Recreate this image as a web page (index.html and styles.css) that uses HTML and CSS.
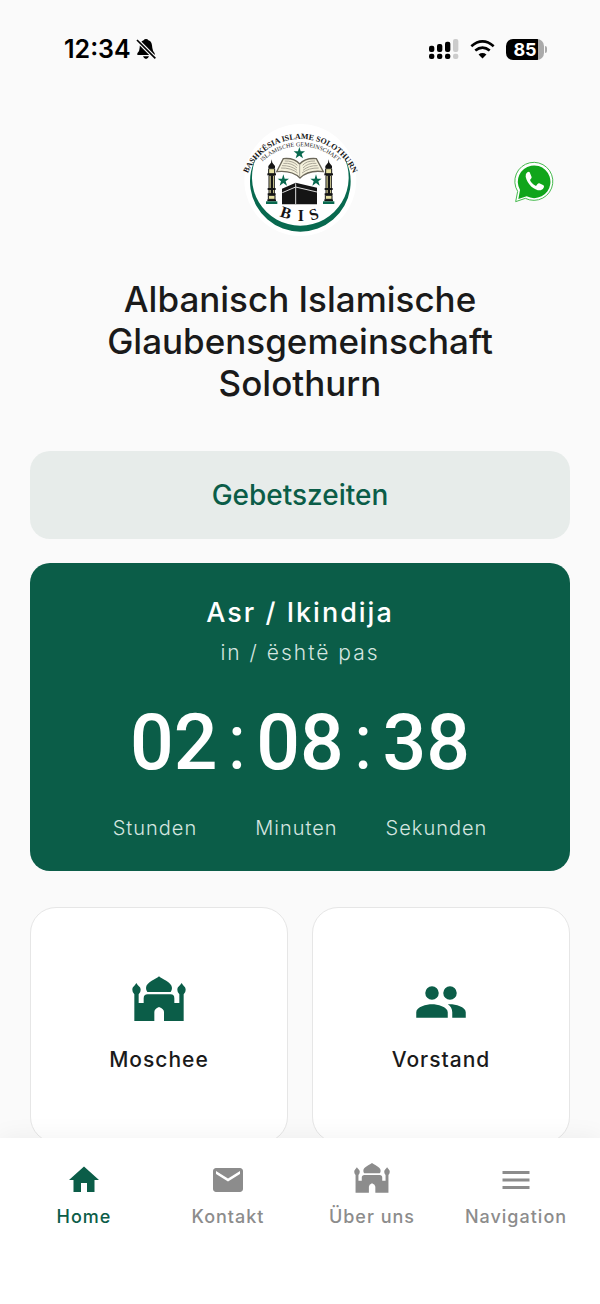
FILE: index.html
```html
<!DOCTYPE html>
<html lang="de">
<head>
<meta charset="utf-8">
<meta name="viewport" content="width=device-width, initial-scale=1">
<title>Albanisch Islamische Glaubensgemeinschaft Solothurn</title>
<link rel="stylesheet" href="styles.css">
</head>
<body>
<svg class="defs" width="0" height="0" aria-hidden="true">
  <symbol id="mosque" viewBox="336 255 162 162">
    <path d="M417 259C423 266 456 276 456 294Q456 301 452 306H382Q378 301 378 294C378 276 411 266 417 259Z"/>
    <path d="M343 393V313Q337 308 337 299C337 290 344 289 349 279C354 289 362 290 362 299Q362 308 356 313V339H371V325Q371 313 383 313H452Q463 313 463 325V339H478V313Q472 308 472 299C472 290 479 289 485 279C490 289 497 290 497 299Q497 308 491 313V393H432V366Q432 357 417 351Q403 357 403 366V393Z"/>
  </symbol>
  <symbol id="people" viewBox="0 0 24 24"><path d="M16 11a3 3 0 1 0 0-6 3 3 0 0 0 0 6zm-8 0a3 3 0 1 0 0-6 3 3 0 0 0 0 6zm0 2c-2.330 0-7 1.170-7 3.500V19h14v-2.500c0-2.330-4.670-3.500-7-3.500zm8 0c-.29 0-.62.020-.97.050 1.160.840 1.970 1.970 1.970 3.450V19h6v-2.500c0-2.330-4.670-3.500-7-3.500z"/></symbol>
  <symbol id="home" viewBox="0 0 24 24"><path d="M10 20v-6h4v6h5v-8h3L12 3 2 12h3v8z"/></symbol>
  <symbol id="mail" viewBox="0 0 24 24"><path d="M20 4H4c-1.100 0-2 .9-2 2v12c0 1.100.9 2 2 2h16c1.100 0 2-.9 2-2V6c0-1.100-.9-2-2-2zm0 4-8 5-8-5V6l8 5 8-5z"/></symbol>
  <symbol id="menu" viewBox="0 0 24 24"><path d="M3 6h18v2H3zM3 11h18v2H3zM3 16h18v2H3z"/></symbol>
</svg>

<div class="app">
  <header class="status">
    <div class="status-side">
      <span class="time">12:34</span>
      <svg class="bell" viewBox="0 0 60 64" aria-label="Stumm">
        <path d="M30 2Q35 2 37 6C47 9 48 18 49 29Q50 38 56 45V50H4V45Q11 38 11 28C12 17 14 9 23 6Q25 2 30 2ZM21 54H39Q36 62 30 62Q24 62 21 54Z"/>
        <path class="bell-gap" d="M1 3 59 61"/><path class="bell-slash" d="M3 5 58 60"/>
      </svg>
    </div>
    <div class="status-side status-right">
      <svg class="signal" viewBox="0 0 90 60" aria-label="Signal">
        <rect x="0" y="20" width="16" height="19" rx="6"/><rect x="24" y="15" width="16" height="24" rx="6"/><rect x="48" y="8" width="16" height="31" rx="6"/><rect class="weak" x="72" y="0" width="16" height="39" rx="6"/>
        <rect x="0" y="44" width="16" height="16" rx="6"/><rect x="24" y="44" width="16" height="16" rx="6"/><rect x="48" y="44" width="16" height="16" rx="6"/><rect class="weak" x="72" y="44" width="16" height="16" rx="6"/>
      </svg>
      <svg class="wifi" viewBox="0 0 76 56" aria-label="WLAN">
        <path d="M4 18Q38-11 72 18M16 31Q38 13 60 31"/><path class="wifi-dot" d="M26 43Q38 34 50 43L38 55Z"/>
      </svg>
      <span class="battery"><span class="battery-level">85</span></span>
    </div>
  </header>

  <main class="content">
    <div class="brand">
      <svg class="logo" viewBox="0 0 390 360" role="img" aria-label="Bashkësia Islame Solothurn">
        <defs>
          <path id="arc-outer" d="M33 174A172 172 0 0 1 359 174"/>
          <path id="arc-inner" d="M76 132A162 162 0 0 1 316 132"/>
          <path id="star" d="M0-18 4-5H17L7 3 11 16 0 8-11 16-7 3-17-5H-4Z"/>
          <g id="minaret">
            <path d="M0-68 2-58 10-48V-42H-10V-48L-2-58Z"/>
            <path class="gold" d="M-9-40H9V-24H-9Z"/><path d="M-13-26H13V-20H-13Z"/>
            <path class="gold" d="M-8-20H8V36H-8Z"/><path d="M-3-20H4V36H-3Z"/>
            <path d="M-12 18H12V24H-12ZM-12 34H12V40H-12Z"/>
            <path class="gold" d="M-10 40H10V52H-10Z"/><path d="M-13 52H13V58H-13Z"/>
            <path class="green" d="M-17 58H17V66H-17Z"/>
          </g>
        </defs>
        <circle class="white" cx="196" cy="180" r="168"/>
        <path class="green" d="M68 104A151 151 0 1 0 324 104A145 145 0 1 1 68 104Z"/>
        <text class="logo-outer" text-anchor="middle"><textPath href="#arc-outer" startOffset="50%">BASHKËSIA ISLAME SOLOTHURN</textPath></text>
        <text class="logo-inner" text-anchor="middle"><textPath href="#arc-inner" startOffset="50%">ISLAMISCHE GEMEINSCHAFT</textPath></text>
        <g class="green"><use href="#star" x="193" y="99"/><use href="#star" x="145" y="181"/><use href="#star" x="243" y="181"/></g>
        <path class="book" d="M145 116Q178 113 194 132Q211 113 244 116L265 155Q220 149 195 174Q171 150 125 155Z"/>
        <path class="lines" d="M149 123Q174 122 187 136M145 130Q171 128 186 144M141 137Q168 136 186 151M138 144Q168 143 188 159M240 123Q214 122 203 136M244 130Q219 128 204 144M248 137Q221 136 204 151M251 144Q222 143 201 159M194 132V170"/>
        <use href="#minaret" x="110" y="186"/><use href="#minaret" x="281" y="186"/>
        <path d="M141 206 182 188 246 203V253H141Z"/>
        <path class="band" d="M142 218 182 201 246 216M182 190V252"/>
        <text class="logo-bis" x="133 188 229" y="289 303 302" rotate="18 0 -18">BIS</text>
      </svg>
      <a class="whatsapp" href="#whatsapp" aria-label="WhatsApp">
        <svg viewBox="0 0 120 126">
          <path class="wa-edge" d="M5 122 11 91A57 57 0 1 1 34 112Z"/>
          <path class="wa-fill" d="M13 114 18 87A49 49 0 1 1 38 106Z"/>
          <path class="wa-phone" d="M40 34Q34 38 35 47C40 70 61 89 80 88Q88 86 90 78Q91 74 87 72L76 67Q73 66 70 70L66 75Q52 68 48 57L52 52Q54 49 52 46L47 34Q45 31 40 34Z"/>
        </svg>
      </a>
    </div>

    <h1 class="title">Albanisch Islamische Glaubensgemeinschaft Solothurn</h1>

    <button class="times" type="button">Gebetszeiten</button>

    <section class="countdown">
      <h2 class="prayer">Asr / Ikindija</h2>
      <p class="until">in / është pas</p>
      <div class="clock"><span>02</span><span class="colon">:</span><span>08</span><span class="colon">:</span><span>38</span></div>
      <div class="units"><span>Stunden</span><span>Minuten</span><span>Sekunden</span></div>
    </section>

    <div class="tiles">
      <a class="tile" href="#moschee"><svg class="tile-icon"><use href="#mosque"/></svg>Moschee</a>
      <a class="tile" href="#vorstand"><svg class="tile-icon"><use href="#people"/></svg>Vorstand</a>
    </div>
  </main>

  <nav class="tabs">
    <a class="tab active" href="#home" aria-current="page"><svg class="tab-icon"><use href="#home"/></svg>Home</a>
    <a class="tab" href="#kontakt"><svg class="tab-icon"><use href="#mail"/></svg>Kontakt</a>
    <a class="tab" href="#ueber-uns"><svg class="tab-icon"><use href="#mosque"/></svg>Über uns</a>
    <a class="tab" href="#navigation"><svg class="tab-icon"><use href="#menu"/></svg>Navigation</a>
  </nav>
</div>
</body>
</html>
```
FILE: styles.css
```css
* { box-sizing: border-box; }

:root {
  --green: #0b5d48;
  --grey: #8c8c8c;
  --ink: #1a1a1a;
}

body {
  margin: 0;
  background: #fafafa;
  color: var(--ink);
  font-family: Inter, "Liberation Sans", sans-serif;
}

a { color: inherit; text-decoration: none; }
svg { display: block; fill: currentColor; }
.defs { position: absolute; }

.app { display: flex; flex-direction: column; height: 100vh; }

/* Status bar */
.status {
  flex: none;
  display: flex;
  justify-content: space-between;
  align-items: center;
  height: 98px;
  padding: 0 56px 0 64px;
  color: #000;
}
.status-side { display: flex; align-items: center; gap: 5px; }
.status-right { gap: 11px; }
.time { font-size: 25px; font-weight: 600; line-height: 30px; }
.bell { width: 20px; height: 22px; }
.bell-gap { stroke: #fafafa; stroke-width: 12; }
.bell-slash { stroke: #000; stroke-width: 5; }
.signal { width: 30px; height: 20px; }
.weak { fill: #ccc; }
.wifi { width: 25px; height: 19px; }
.wifi path { fill: none; stroke: #000; stroke-width: 8; }
.wifi .wifi-dot { fill: #000; stroke: none; }
.battery {
  position: relative;
  width: 38px;
  height: 21px;
  border-radius: 7px;
  background: linear-gradient(90deg, #000 84%, #aaa 84%);
}
.battery::after {
  content: "";
  position: absolute;
  left: 39px;
  top: 7px;
  width: 2px;
  height: 7px;
  border-radius: 0 2px 2px 0;
  background: #aaa;
}
.battery-level {
  display: block;
  color: #fff;
  font-size: 18px;
  font-weight: 700;
  line-height: 21px;
  text-align: center;
}

/* Scrolling content */
.content {
  flex: 1;
  min-height: 0;
  overflow-y: auto;
  scrollbar-width: none;
  padding: 22px 30px 24px;
}

.brand {
  display: grid;
  grid-template-columns: 1fr auto 1fr;
  align-items: center;
  padding-right: 16px;
  padding-left: 16px;
}
.logo { grid-column: 2; width: 130px; height: 120px; color: #151515; }
.logo .white { fill: #fff; }
.logo .green { fill: #08694f; }
.logo .gold { fill: #e4dfa0; stroke: #151515; stroke-width: 3; }
.logo .book { fill: #f5f1dc; stroke: #6b675a; stroke-width: 4; }
.logo .lines { fill: none; stroke: #aaa698; stroke-width: 3; }
.logo .band { fill: none; stroke: #ddd; stroke-width: 3; }
.logo-outer, .logo-inner, .logo-bis { font-family: "Liberation Serif", serif; }
.logo-outer { font-size: 24px; font-weight: 700; }
.logo-inner { font-size: 18px; }
.logo-bis { font-size: 48px; font-weight: 700; }

.whatsapp { justify-self: end; width: 40px; padding-top: 4px; }
.wa-edge { fill: #fff; stroke: #45ba4d; stroke-width: 3; }
.wa-fill { fill: #10a51b; }
.wa-phone { fill: #fff; }

.title {
  max-width: 440px;
  margin: 38px auto 47px;
  font-size: 35px;
  font-weight: 500;
  line-height: 42px;
  text-align: center;
}

.times {
  display: block;
  width: 100%;
  padding: 24px;
  border: 0;
  border-radius: 20px;
  background: #e7ecea;
  color: var(--green);
  font: 500 28px/40px Inter, "Liberation Sans", sans-serif;
}

.countdown {
  margin-top: 24px;
  padding: 30px 24px 28px;
  border-radius: 20px;
  background: var(--green);
  color: #fff;
  text-align: center;
}
.prayer { margin: 0; font-size: 27px; font-weight: 500; line-height: 40px; letter-spacing: 2px; }
.until { margin: 4px 0 0; font-size: 21px; font-weight: 300; line-height: 32px; letter-spacing: 2px; color: #d5e6e0; }
.clock {
  display: flex;
  justify-content: center;
  gap: 10px;
  margin-top: 26px;
  font: 500 77px/96px Roboto, "Liberation Sans", sans-serif;
}
.colon { font-weight: 400; }
.units {
  display: flex;
  justify-content: center;
  gap: 48px;
  margin-top: 22px;
  font-size: 20px;
  font-weight: 300;
  line-height: 30px;
  letter-spacing: 1px;
  color: #d5e6e0;
}
.units span:first-child { margin-right: 10px; }

.tiles {
  display: grid;
  grid-template-columns: 1fr 1fr;
  gap: 24px;
  margin-top: 36px;
}
.tile {
  display: flex;
  flex-direction: column;
  align-items: center;
  justify-content: center;
  gap: 16px;
  padding: 67px 16px;
  border: 1px solid #e6e6e6;
  border-radius: 26px;
  background: #fff;
  font-size: 21px;
  font-weight: 500;
  line-height: 30px;
  letter-spacing: 1px;
}
.tile-icon { width: 54px; height: 54px; color: var(--green); }

/* Bottom navigation */
.tabs {
  position: relative;
  flex: none;
  display: grid;
  grid-template-columns: repeat(4, 1fr);
  padding: 24px 12px 75px;
  background: #fff;
  box-shadow: 0 0 24px rgba(0, 0, 0, 0.06);
}
.tab {
  display: flex;
  flex-direction: column;
  align-items: center;
  gap: 7px;
  color: var(--grey);
  font-size: 18px;
  font-weight: 500;
  line-height: 24px;
  letter-spacing: 1px;
}
.tab-icon { width: 36px; height: 36px; }
.active { color: var(--green); }
```
